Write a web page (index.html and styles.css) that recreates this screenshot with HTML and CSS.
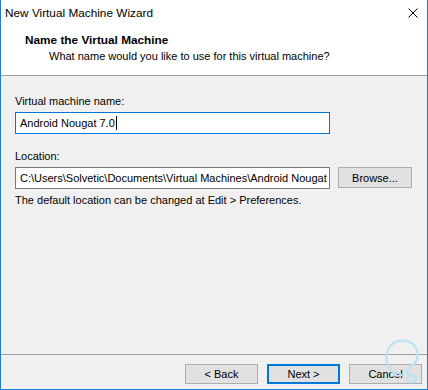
FILE: index.html
```html
<!DOCTYPE html>
<html>
<head>
<meta charset="utf-8">
<link rel="stylesheet" href="styles.css">
</head>
<body>
<div class="window">
  <div class="header">
    <div class="titlebar">
      <span class="title">New Virtual Machine Wizard</span>
      <svg class="close" width="10" height="10" viewBox="0 0 10 10"><path d="M0.5 0.5L9.5 9.5M9.5 0.5L0.5 9.5" stroke="#000" stroke-width="1"/></svg>
    </div>
    <div class="heading">Name the Virtual Machine</div>
    <div class="subheading">What name would you like to use for this virtual machine?</div>
  </div>
  <div class="body">
    <div class="label">Virtual machine name:</div>
    <div class="input focused"><span>Android Nougat 7.0</span><span class="caret"></span></div>
    <div class="label loc">Location:</div>
    <div class="row">
      <div class="input"><span class="clip">C:\Users\Solvetic\Documents\Virtual Machines\Android Nougat 7.0</span></div>
      <div class="btn browse">Browse...</div>
    </div>
    <div class="hint">The default location can be changed at Edit &gt; Preferences.</div>
  </div>
  <div class="footer">
    <div class="btn">&lt; Back</div>
    <div class="btn default">Next &gt;</div>
    <div class="btn">Cancel</div>
  </div>
  <svg class="watermark" width="44" height="50" viewBox="0 0 44 50"><path d="M14 40 C8 34 4 28 6 18 C8 8 18 4 26 6 C34 8 38 16 36 24 C34 30 28 32 26 36 C25 39 28 40 32 41 C36 42 36 46 31 47 C27 48 24 45 26 43" fill="none" stroke="#bfe3f0" stroke-width="2.5" stroke-linecap="round"/><path d="M14 40 C16 37 18 37 20 40" fill="none" stroke="#bfe3f0" stroke-width="2.5" stroke-linecap="round"/></svg>
</div>
</body>
</html>
```
FILE: styles.css
```css
* { box-sizing: border-box; }
html, body { margin: 0; padding: 0; background: #ffffff; }
body { font-family: "Liberation Sans", Arial, sans-serif; font-size: 11px; color: #000; }
.window {
  position: relative;
  width: 428px;
  height: 390px;
  border: 1px solid #1a7fd4;
  border-top: none;
  background: #f0f0f0;
  display: flex;
  flex-direction: column;
  overflow: hidden;
}
.header {
  height: 76px;
  background: #fff;
  border-bottom: 1px solid #a0a0a0;
  flex: none;
}
.titlebar {
  height: 26px;
  display: flex;
  align-items: center;
  justify-content: space-between;
  padding: 0 9px 0 4px;
  font-size: 11.8px;
}
.close { display: block; }
.heading {
  margin-top: 6px;
  padding-left: 24px;
  font-weight: bold;
  font-size: 11.8px;
  line-height: 16px;
}
.subheading {
  padding-left: 48px;
  line-height: 16px;
}
.body {
  flex: 1;
  padding: 17px 14px 0 14px;
}
.label { line-height: 16px; margin-bottom: 3px; }
.label.loc { margin-top: 14px; }
.input {
  width: 315px;
  height: 22px;
  background: #fff;
  border: 1px solid #7a7a7a;
  display: flex;
  align-items: center;
  padding-left: 4px;
  overflow: hidden;
  white-space: nowrap;
}
.input.focused { border-color: #0078d7; }
.caret { display: inline-block; width: 1px; height: 14px; background: #000; margin-left: 1px; }
.clip { display: block; overflow: hidden; min-width: 0; width: 100%; }
.row { display: flex; align-items: flex-start; gap: 8px; }
.btn {
  height: 21px;
  width: 73px;
  background: #e1e1e1;
  border: 1px solid #adadad;
  display: flex;
  align-items: center;
  justify-content: center;
}
.browse { width: 74px; }
.hint { margin-top: 3px; line-height: 16px; }
.footer {
  flex: none;
  height: 35px;
  border-top: 1px solid #a0a0a0;
  display: flex;
  justify-content: flex-end;
  align-items: flex-start;
  gap: 9px;
  padding: 9px 5px 0 0;
}
.footer .btn { height: 20px; }
.btn.default { border: 2px solid #0078d7; }
.watermark { position: absolute; right: 2px; bottom: 4px; }
```
